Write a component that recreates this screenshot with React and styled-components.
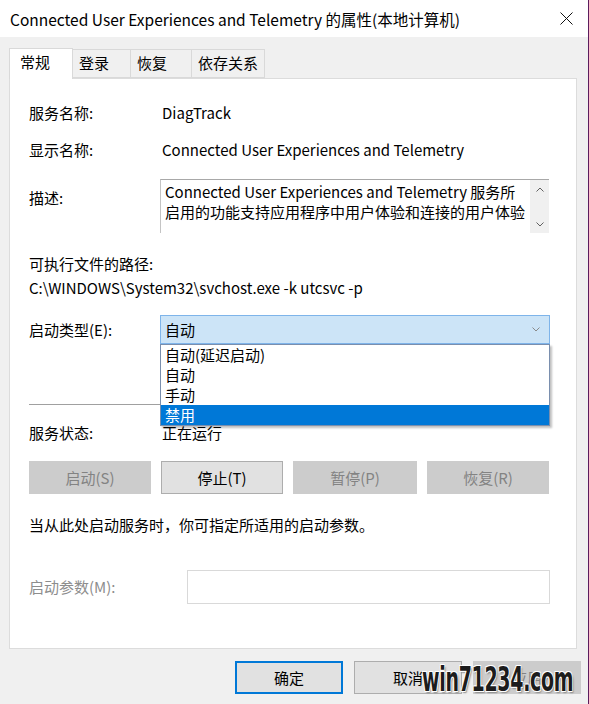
import React from "react";
import styled, { createGlobalStyle } from "styled-components";

const GlobalStyle = createGlobalStyle`
  html, body {
    margin: 0;
    padding: 0;
    background: #f0f0f0;
  }
  body {
    font-family: "Noto Sans CJK SC", "Noto Sans", sans-serif;
    font-size: 15px;
    color: #000;
  }
`;

const Window = styled.div`
  width: 589px;
  height: 704px;
  box-sizing: border-box;
  border-right: 1px solid #5b1d5e;
  background: #f0f0f0;
  display: flex;
  flex-direction: column;
  position: relative;
  overflow: hidden;
`;

const TitleBar = styled.div`
  height: 37px;
  background: #fff;
  display: flex;
  align-items: center;
  justify-content: space-between;
  padding: 0 15px 0 10px;
  box-sizing: border-box;
  font-size: 15.5px;
  line-height: 20px;
`;

const CloseIcon = () => (
  <svg width="13" height="13" viewBox="0 0 13 13">
    <path d="M0.5 0.5 L12.5 12.5 M12.5 0.5 L0.5 12.5" stroke="#111" strokeWidth="1" fill="none" />
  </svg>
);

const Body = styled.div`
  flex: 1;
  padding: 11px 11px 0 9px;
  display: flex;
  flex-direction: column;
`;

const TabRow = styled.div`
  display: flex;
  align-items: flex-end;
  height: 30px;
  position: relative;
  z-index: 1;
`;

const Tab = styled.div`
  width: ${({ w }) => w}px;
  box-sizing: border-box;
  height: ${({ active }) => (active ? 31 : 29)}px;
  margin-bottom: ${({ active }) => (active ? -1 : 0)}px;
  padding-left: ${({ active }) => (active ? 10 : 6)}px;
  background: ${({ active }) => (active ? "#fff" : "#f0f0f0")};
  border: 1px solid #d9d9d9;
  border-bottom: ${({ active }) => (active ? "none" : "1px solid #d9d9d9")};
  border-left: ${({ first }) => (first ? "1px solid #d9d9d9" : "none")};
  line-height: 26px;
`;

const Panel = styled.div`
  height: 571px;
  box-sizing: border-box;
  background: #fff;
  border: 1px solid #dcdcdc;
  padding: 24px 26px 0 19px;
  display: flex;
  flex-direction: column;
`;

const Row = styled.div`
  display: flex;
  align-items: ${({ top }) => (top ? "flex-start" : "center")};
  margin-top: ${({ mt = 0 }) => mt}px;
  line-height: 20px;
  position: relative;
`;

const Label = styled.div`
  width: ${({ w = 131 }) => w}px;
  flex-shrink: 0;
  padding-top: ${({ pt = 0 }) => pt}px;
  color: ${({ disabled }) => (disabled ? "#8d8d8d" : "#000")};
`;

const Value = styled.div`
  padding-left: 2px;
  white-space: nowrap;
`;

const Text = styled.div`
  line-height: 20px;
  margin-top: ${({ mt = 0 }) => mt}px;
  white-space: nowrap;
`;

const DescBox = styled.div`
  width: 389px;
  height: 54px;
  box-sizing: border-box;
  border-top: 1px solid #a8a8a8;
  border-left: 1px solid #c4c4c4;
  display: flex;
`;

const DescText = styled.div`
  flex: 1;
  padding: 2px 0 0 4px;
  line-height: 20px;
  white-space: nowrap;
  overflow: hidden;
`;

const ScrollBar = styled.div`
  width: 19px;
  background: #f0f0f0;
  display: flex;
  flex-direction: column;
  justify-content: space-between;
  align-items: center;
  padding: 7px 0 6px;
`;

const Chevron = ({ up, color = "#606060" }) => (
  <svg width="8" height="5" viewBox="0 0 8 5">
    <path
      d={up ? "M0.5 4.5 L4 1 L7.5 4.5" : "M0.5 0.5 L4 4 L7.5 0.5"}
      stroke={color}
      strokeWidth="1"
      fill="none"
    />
  </svg>
);

const SelectWrap = styled.div`
  position: relative;
  width: 390px;
`;

const Select = styled.div`
  height: 29px;
  box-sizing: border-box;
  background: #cce4f7;
  border: 1px solid #7eb4ea;
  display: flex;
  align-items: center;
  justify-content: space-between;
  padding: 0 9px 0 4px;
`;

const DropList = styled.div`
  position: absolute;
  top: 29px;
  left: 0;
  width: 390px;
  box-sizing: border-box;
  background: #fff;
  border: 1px solid #7a8fae;
  box-shadow: 2px 2px 2px rgba(0, 0, 0, 0.25);
  z-index: 5;
`;

const Option = styled.div`
  height: 20px;
  line-height: 20px;
  padding-left: 4px;
  background: ${({ selected }) => (selected ? "#0078d7" : "transparent")};
  color: ${({ selected }) => (selected ? "#fff" : "#000")};
`;

const Separator = styled.div`
  height: 1px;
  background: #a0a0a0;
  margin-top: ${({ mt = 0 }) => mt}px;
`;

const ButtonGrid = styled.div`
  display: grid;
  grid-template-columns: 122px 122px 124px 122px;
  column-gap: 10px;
  margin-top: 18px;
  margin-right: -1px;
`;

const Button = styled.div`
  height: 33px;
  box-sizing: border-box;
  display: flex;
  align-items: center;
  justify-content: center;
  background: ${({ disabled }) => (disabled ? "#cccccc" : "#e1e1e1")};
  border: 1px solid ${({ disabled, primary }) => (primary ? "#0078d7" : disabled ? "#cccccc" : "#adadad")};
  box-shadow: ${({ primary }) => (primary ? "inset 0 0 0 1px #0078d7" : "none")};
  color: ${({ disabled }) => (disabled ? "#838383" : "#000")};
`;

const ParamInput = styled.div`
  width: 364px;
  height: 34px;
  box-sizing: border-box;
  border: 1px solid #d9d9d9;
  background: #fff;
`;

const Footer = styled.div`
  display: grid;
  grid-template-columns: repeat(3, 108px);
  column-gap: 11px;
  justify-content: end;
  margin-top: 12px;
  margin-right: -4px;
`;

const Watermark = styled.div`
  position: absolute;
  left: 422px;
  top: 660px;
  font-family: "DejaVu Sans Condensed", "Liberation Sans Narrow", "Liberation Sans", sans-serif;
  font-size: 33px;
  font-weight: bold;
  line-height: 40px;
  letter-spacing: -0.5px;
  white-space: nowrap;
  color: #1c1c1c;
  transform: scaleX(0.64);
  transform-origin: left center;
  text-shadow: 1px 1px 0 #fff, -1px -1px 0 #fff, 1px -1px 0 #fff, -1px 1px 0 #fff,
    2px 2px 2px #888;
`;

const options = ["自动(延迟启动)", "自动", "手动", "禁用"];

const App = () => {
  return (
    <Window>
      <GlobalStyle />
      <TitleBar>
        <span>Connected User Experiences and Telemetry 的属性(本地计算机)</span>
        <CloseIcon />
      </TitleBar>
      <Body>
        <TabRow>
          <Tab active first w={64}>常规</Tab>
          <Tab w={58}>登录</Tab>
          <Tab w={61}>恢复</Tab>
          <Tab w={73}>依存关系</Tab>
        </TabRow>
        <Panel>
          <Row>
            <Label>服务名称:</Label>
            <Value>DiagTrack</Value>
          </Row>
          <Row mt={17}>
            <Label>显示名称:</Label>
            <Value>Connected User Experiences and Telemetry</Value>
          </Row>
          <Row top mt={19}>
            <Label pt={9}>描述:</Label>
            <DescBox>
              <DescText>
                Connected User Experiences and Telemetry 服务所
                <br />
                启用的功能支持应用程序中用户体验和连接的用户体验
              </DescText>
              <ScrollBar>
                <Chevron up />
                <Chevron />
              </ScrollBar>
            </DescBox>
          </Row>
          <Text mt={21}>可执行文件的路径:</Text>
          <Text mt={4}>C:\WINDOWS\System32\svchost.exe -k utcsvc -p</Text>
          <Row mt={17} style={{ zIndex: 5 }}>
            <Label>启动类型(E):</Label>
            <SelectWrap>
              <Select>
                <span>自动</span>
                <Chevron color="#8a8a8a" />
              </Select>
              <DropList>
                {options.map(o => (
                  <Option key={o} selected={o === "禁用"}>
                    {o}
                  </Option>
                ))}
              </DropList>
            </SelectWrap>
          </Row>
          <Separator mt={60} />
          <Row mt={18}>
            <Label>服务状态:</Label>
            <Value>正在运行</Value>
          </Row>
          <ButtonGrid>
            <Button disabled>启动(S)</Button>
            <Button>停止(T)</Button>
            <Button disabled>暂停(P)</Button>
            <Button disabled>恢复(R)</Button>
          </ButtonGrid>
          <Text mt={21}>当从此处启动服务时，你可指定所适用的启动参数。</Text>
          <Row mt={35}>
            <Label w={158} disabled>
              启动参数(M):
            </Label>
            <ParamInput />
          </Row>
        </Panel>
        <Footer>
          <Button primary>确定</Button>
          <Button>取消</Button>
          <Button disabled>应用</Button>
        </Footer>
      </Body>
      <Watermark>win71234.com</Watermark>
    </Window>
  );
};

export default App;
